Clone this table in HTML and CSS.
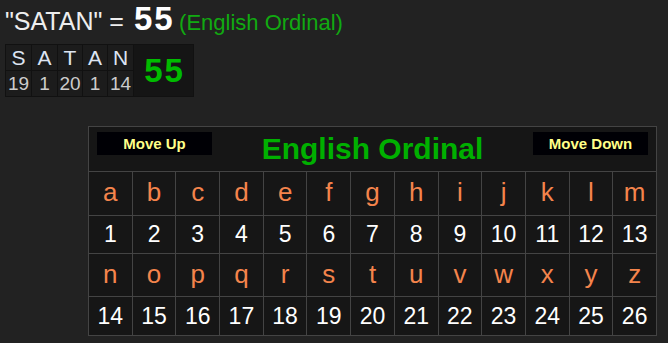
FILE: index.html
```html
<!DOCTYPE html>
<html lang="en">
<head>
<meta charset="UTF-8">
<meta name="viewport" content="width=device-width, initial-scale=1.0">
<title>Gematria - English Ordinal</title>
<link rel="stylesheet" href="styles.css">
</head>
<body>

<div id="result">
    <span class="phrase">"SATAN" = </span><span class="total">55</span> <span class="cipherName">(English Ordinal)</span>
</div>

<div id="breakdown">
    <div id="breakdownLetters"></div>
    <div id="breakdownTotal">55</div>
</div>

<div id="cipherChart">
    <div id="chartHeader">
        <button class="moveButton" onclick="moveCipher(-1)">Move Up</button>
        <div id="chartTitle">English Ordinal</div>
        <button class="moveButton" onclick="moveCipher(1)">Move Down</button>
    </div>
    <div id="chartGrid"></div>
</div>

<script>
    var phrase = 'SATAN';
    var alphabet = 'abcdefghijklmnopqrstuvwxyz';

    function letterValue(ch) {
        return alphabet.indexOf(ch.toLowerCase()) + 1;
    }

    function buildBreakdown() {
        var box = document.getElementById('breakdownLetters');
        var i;

        for (i = 0; i < phrase.length; i++) {
            var cell = document.createElement('div');
            cell.className = 'bdLetter';
            cell.innerText = phrase[i];
            box.appendChild(cell);
        }
        for (i = 0; i < phrase.length; i++) {
            var num = document.createElement('div');
            num.className = 'bdNumber';
            num.innerText = letterValue(phrase[i]);
            box.appendChild(num);
        }
    }

    function buildChart() {
        var grid = document.getElementById('chartGrid');

        // two halves of the alphabet, each a row of letters then a row of values
        for (var half = 0; half < 2; half++) {
            var j;
            for (j = 0; j < 13; j++) {
                var letter = document.createElement('div');
                letter.className = 'chartLetter';
                letter.innerText = alphabet[half * 13 + j];
                grid.appendChild(letter);
            }
            for (j = 0; j < 13; j++) {
                var value = document.createElement('div');
                value.className = 'chartValue';
                value.innerText = half * 13 + j + 1;
                grid.appendChild(value);
            }
        }
    }

    function moveCipher(step) {
        // only one cipher on this page, nothing to reorder
    }

    buildBreakdown();
    buildChart();
</script>

</body>
</html>
```

FILE: styles.css
```css
body {
    font-family: 'Liberation Sans', Arial, sans-serif;
    margin: 0;
    background-color: #222222;
    color: #eeeeee;
}

#result {
    padding: 0 0 0 5px;
    height: 40px;
    line-height: 37px;
    white-space: nowrap;
}

#result .phrase {
    font-size: 25px;
    color: #eeeeee;
}

#result .total {
    font-size: 33px;
    font-weight: bold;
    letter-spacing: 2px;
    color: #ffffff;
    margin-left: 3px;
}

#result .cipherName {
    font-size: 22px;
    color: #11aa11;
}

#breakdown {
    display: inline-flex;
    margin: 4px 0 0 5px;
    background-color: #111111;
    border: 1px solid #111111;
    gap: 1px;
}

#breakdownLetters {
    display: grid;
    grid-template-columns: 25px 25px 24px 24px 25px;
    grid-template-rows: 25px 25px;
    gap: 1px;
}

.bdLetter,
.bdNumber {
    background-color: #1c1c1c;
    display: flex;
    align-items: center;
    justify-content: center;
}

.bdLetter {
    font-size: 21px;
    color: #dde4f2;
}

.bdNumber {
    font-size: 19px;
    color: #cccccc;
}

#breakdownTotal {
    width: 59px;
    background-color: #151515;
    color: #00bb00;
    font-size: 33px;
    font-weight: bold;
    letter-spacing: 2px;
    text-indent: 2px;
    display: flex;
    align-items: center;
    justify-content: center;
}

#cipherChart {
    width: 569px;
    box-sizing: border-box;
    margin: 29px 0 0 88px;
    border: 1px solid #444444;
    background-color: #161616;
}

#chartHeader {
    height: 45px;
    box-sizing: border-box;
    padding: 5px 8px 0 8px;
    display: flex;
    justify-content: space-between;
    align-items: flex-start;
    border-bottom: 1px solid #444444;
}

.moveButton {
    width: 115px;
    height: 23px;
    padding: 0;
    border: none;
    background-color: #000005;
    color: #ffff88;
    font-family: 'Liberation Sans', Arial, sans-serif;
    font-size: 15px;
    font-weight: bold;
    line-height: 23px;
    cursor: pointer;
}

#chartTitle {
    font-size: 30px;
    font-weight: bold;
    color: #00b000;
    line-height: 36px;
    margin-top: -1px;
}

#chartGrid {
    display: grid;
    grid-template-columns: repeat(13, 1fr);
    grid-template-rows: 43px 37px 42px 38px;
    gap: 1px;
    background-color: #444444;
}

.chartLetter,
.chartValue {
    background-color: #161616;
    display: flex;
    align-items: center;
    justify-content: center;
}

.chartLetter {
    font-size: 26px;
    color: #f4844c;
    padding-bottom: 2px;
}

.chartValue {
    font-size: 23px;
    color: #ffffff;
}
```
